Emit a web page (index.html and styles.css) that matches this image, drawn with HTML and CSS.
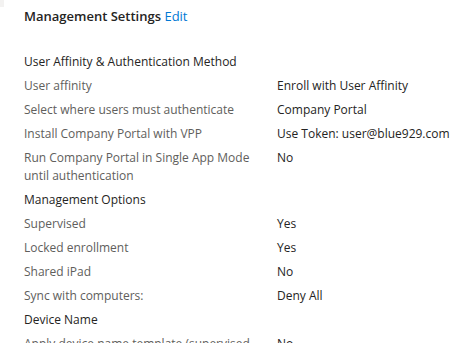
FILE: index.html
```html
<!DOCTYPE html>
<html>
<head>
<meta charset="utf-8">
<link rel="stylesheet" href="styles.css">
</head>
<body>
<div class="corner"></div>
<div class="page">
  <h2 class="title">Management Settings <a class="edit" href="#">Edit</a></h2>
  <div class="grid">
    <div class="section">User Affinity &amp; Authentication Method</div>
    <div class="label">User affinity</div><div class="value">Enroll with User Affinity</div>
    <div class="label">Select where users must authenticate</div><div class="value">Company Portal</div>
    <div class="label">Install Company Portal with VPP</div><div class="value">Use Token: user@blue929.com</div>
    <div class="label">Run Company Portal in Single App Mode until authentication</div><div class="value">No</div>
    <div class="section">Management Options</div>
    <div class="label">Supervised</div><div class="value">Yes</div>
    <div class="label">Locked enrollment</div><div class="value">Yes</div>
    <div class="label">Shared iPad</div><div class="value">No</div>
    <div class="label">Sync with computers:</div><div class="value">Deny All</div>
    <div class="section">Device Name</div>
    <div class="label">Apply device name template (supervised only)</div><div class="value">No</div>
  </div>
</div>
</body>
</html>
```
FILE: styles.css
```css
html, body { margin: 0; padding: 0; background: #fff; }
body { font-family: "Open Sans", "Noto Sans", sans-serif; color: #323130; overflow: hidden; height: 343px; }
.corner { position: absolute; left: 0; top: 0; width: 4px; height: 7px; background: #f3f2f1; }
.page { padding: 6px 0 0 24px; }
.title { margin: 0; font-size: 13px; font-weight: 600; line-height: 20px; color: #252423; }
.edit { color: #0078d4; text-decoration: none; font-weight: 400; }
.grid { display: grid; grid-template-columns: 253px 1fr; margin-top: 24px; font-size: 12px; line-height: 18px; }
.section { grid-column: 1 / -1; padding: 3px 0; color: #252423; }
.label { padding: 3px 8px 3px 0; color: #605e5c; }
.value { padding: 3px 0; color: #252423; }
```
